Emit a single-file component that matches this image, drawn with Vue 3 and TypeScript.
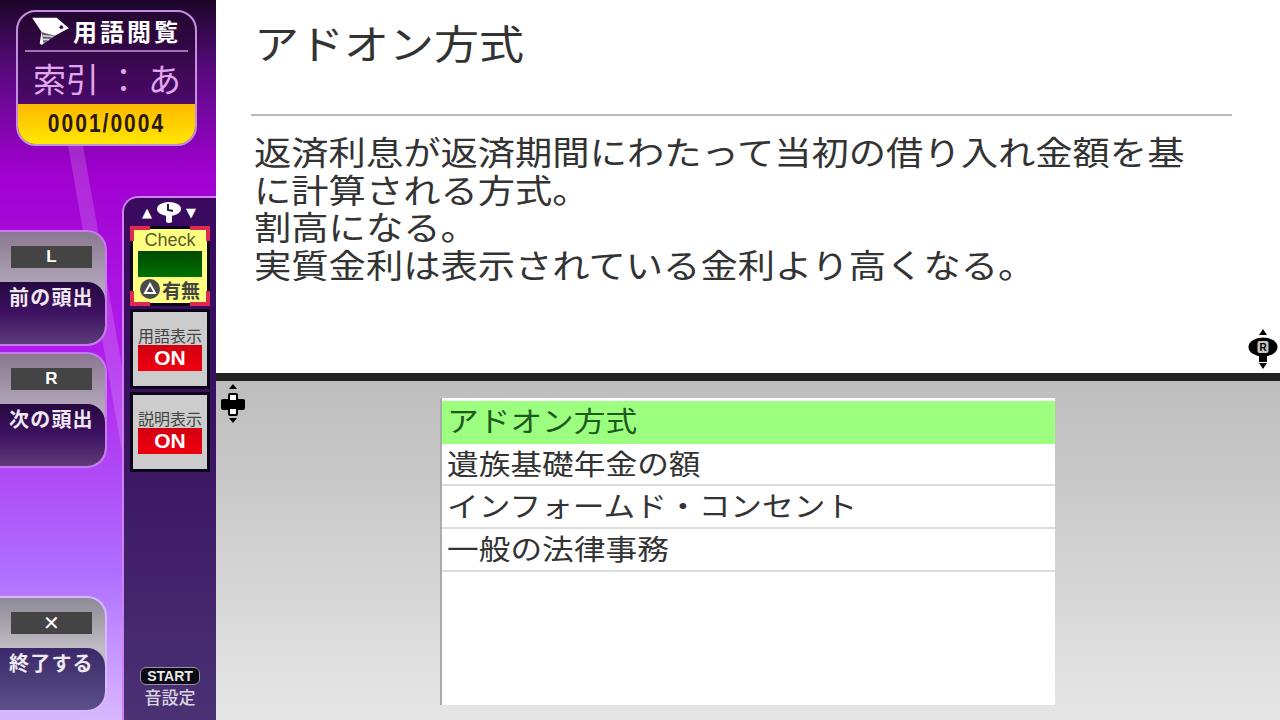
<script setup lang="ts">
interface NavButton { key: string; label: string; offset: string }
const navButtons: NavButton[] = [
  { key: 'L', label: '前の頭出', offset: 'top' },
  { key: 'R', label: '次の頭出', offset: 'mid' },
  { key: '✕', label: '終了する', offset: 'end' },
]
const toggles = ['用語表示', '説明表示']
const terms = ['アドオン方式', '遺族基礎年金の額', 'インフォームド・コンセント', '一般の法律事務']
const lines = [
  '返済利息が返済期間にわたって当初の借り入れ金額を基',
  'に計算される方式。',
  '割高になる。',
  '実質金利は表示されている金利より高くなる。',
]
</script>

<template>
  <div class="screen">
    <aside class="side">
      <div class="streak"></div>
      <header class="card">
        <div class="card-title">
          <svg class="tag" viewBox="0 0 40 34" width="38" height="32">
            <path d="M0 3 L26 3 L39 14 L24 22 L10 32 L8 30 L10 18 Z" fill="#fff" />
            <path d="M10 18 L24 22 L12 30 Z" fill="#6a5a78" />
            <path d="M11 22 L22 23 M11 26 L18 26" stroke="#ddd" stroke-width="1.5" />
            <circle cx="31" cy="13" r="2" fill="#3b0a55" />
          </svg>
          <span>用語閲覧</span>
        </div>
        <div class="card-index"><span>索引</span><span class="colon">：</span><span>あ</span></div>
        <div class="card-count"><span>0001/0004</span></div>
      </header>

      <div class="side-body">
        <div class="nav-col">
          <div v-for="b in navButtons" :key="b.key" class="nav-btn" :class="b.offset">
            <div class="nav-key">{{ b.key }}</div>
            <div class="nav-label">{{ b.label }}</div>
          </div>
        </div>

        <div class="panel">
          <div class="panel-head">
            <span class="tri">▲</span>
            <svg viewBox="0 0 26 24" width="26" height="24">
              <path d="M10 12 L16 12 L16 22 Q13 24 10 22 Z" fill="#fff" />
              <ellipse cx="13" cy="9" rx="12" ry="7" fill="#fff" />
              <path d="M12 4 L12 10 L17 11" stroke="#2a1a3a" stroke-width="2" fill="none" />
            </svg>
            <span class="tri">▼</span>
          </div>
          <div class="check">
            <i class="c tl"></i><i class="c tr"></i><i class="c bl"></i><i class="c br"></i>
            <div class="check-title">Check</div>
            <div class="check-field"></div>
            <div class="check-foot">
              <svg viewBox="0 0 20 20" width="20" height="20">
                <circle cx="10" cy="10" r="10" fill="#4a4a4a" />
                <path d="M10 5 L15 14 L5 14 Z" fill="none" stroke="#fff" stroke-width="2" />
              </svg>
              <span>有無</span>
            </div>
          </div>
          <div v-for="t in toggles" :key="t" class="toggle">
            <div class="toggle-label">{{ t }}</div>
            <div class="toggle-on">ON</div>
          </div>
          <div class="start">
            <div class="start-pill">START</div>
            <div class="start-label">音設定</div>
          </div>
        </div>
      </div>
    </aside>

    <main class="main">
      <section class="upper">
        <h1 class="title">アドオン方式</h1>
        <hr class="rule" />
        <div class="desc">
          <div v-for="l in lines" :key="l" class="desc-line">{{ l }}</div>
        </div>
        <svg class="r-pad" viewBox="0 0 30 42" width="30" height="42">
          <path d="M15 0 L19 6 L11 6 Z M15 40 L19 34 L11 34 Z" fill="#000" />
          <path d="M11 22 L19 22 L19 33 L11 33 Z" fill="#000" />
          <ellipse cx="15" cy="18" rx="14.5" ry="9.5" fill="#000" />
          <rect x="9.5" y="12" width="11" height="12" rx="2" fill="#c4c4c4" />
          <text x="15" y="22" text-anchor="middle" class="r-text">R</text>
        </svg>
      </section>
      <section class="lower">
        <svg class="d-pad" viewBox="0 0 24 40" width="24" height="40">
          <path d="M12 0 L16 5 L8 5 Z M12 39 L16 34 L8 34 Z" fill="#000" />
          <path d="M7 11 Q7 9 9 9 H15 Q17 9 17 11 V15 H22 Q24 15 24 17 V24 Q24 26 22 26 H17 V30 Q17 32 15 32 H9 Q7 32 7 30 V26 H2 Q0 26 0 24 V17 Q0 15 2 15 H7 Z" fill="#000" />
          <path d="M9 11 H15 V16 H9 Z M9 25 H15 V30 H9 Z" fill="#fff" />
        </svg>
        <ul class="list">
          <li v-for="(t, i) in terms" :key="t" class="row" :class="{ active: i === 0 }"><span class="row-text">{{ t }}</span></li>
        </ul>
      </section>
    </main>
  </div>
</template>

<style>
html, body { margin: 0; padding: 0; background: #000; }
</style>

<style scoped>
.screen {
  display: flex;
  width: 1280px;
  height: 720px;
  overflow: hidden;
  font-family: "Noto Sans CJK JP", "Liberation Sans", sans-serif;
}
.side {
  position: relative;
  width: 216px;
  flex: none;
  padding-top: 10px;
  box-sizing: border-box;
  background: linear-gradient(180deg, #1c0628 0%, #5a0a80 10%, #a000d0 24%, #b020ec 50%, #b070ff 80%, #d8b8ff 100%);
}
.streak {
  position: absolute;
  left: 60px;
  top: 100px;
  width: 15px;
  height: 640px;
  background: rgba(255, 255, 255, 0.16);
  transform: skewX(10deg);
  transform-origin: top;
}
.card {
  position: relative;
  width: 181px;
  height: 136px;
  margin-left: 16px;
  box-sizing: border-box;
  border: 2px solid #c58fe0;
  border-radius: 20px;
  background: linear-gradient(180deg, #24062f 0%, #5c0a84 100%);
  overflow: hidden;
  display: flex;
  flex-direction: column;
}
.card-title {
  display: flex;
  align-items: center;
  gap: 3px;
  height: 38px;
  margin: 0 7px;
  padding-left: 7px;
  border-bottom: 2px solid #a070b0;
  color: #fff;
  font-weight: 700;
  font-size: 24px;
  line-height: 1;
  letter-spacing: 3px;
  white-space: nowrap;
}
.tag { flex: none; }
.card-index {
  display: flex;
  justify-content: space-between;
  padding: 0 14px 0 15px;
  height: 52px;
  align-items: center;
  color: #e0a8ec;
  font-size: 33px;
  line-height: 1;
  font-weight: 400;
}
.colon { width: 34px; text-align: center; }
.card-count {
  flex: 1;
  display: flex;
  align-items: center;
  justify-content: center;
  background: linear-gradient(180deg, #ffb800 0%, #ffe800 100%);
  color: #2a1a10;
  font-family: "Liberation Sans", sans-serif;
  font-weight: 700;
  font-size: 21px;
  letter-spacing: 2px;
}
.card-count span { display: inline-block; transform: scaleY(1.2); }
.side-body {
  position: relative;
  display: flex;
  justify-content: space-between;
  margin-top: 50px;
}
.nav-col {
  width: 107px;
  height: 524px;
  display: flex;
  flex-direction: column;
  padding-top: 34px;
  box-sizing: border-box;
}
.nav-btn {
  position: relative;
  box-sizing: border-box;
  height: 116px;
  padding-top: 14px;
  border: 2px solid #c878f0;
  border-left: none;
  border-radius: 0 20px 20px 0;
  background: linear-gradient(180deg, #8a7890 0%, #b4a8bc 50%);
  overflow: hidden;
}
.nav-btn.mid { margin-top: 6px; }
.nav-btn.end {
  margin-top: auto;
  margin-bottom: 8px;
  border-color: #d8b8ff;
  background: linear-gradient(180deg, #8e8a96 0%, #c0bcc4 45%);
}
.nav-key {
  margin-left: 11px;
  width: 81px;
  height: 22px;
  background: #444;
  color: #fff;
  font-family: "Liberation Sans", sans-serif;
  font-weight: 700;
  font-size: 17px;
  line-height: 22px;
  text-align: center;
}
.nav-btn.end .nav-key { font-family: "DejaVu Sans", sans-serif; font-size: 20px; }
.nav-label {
  position: absolute;
  left: 0;
  right: 0;
  bottom: 0;
  top: 50px;
  padding-left: 9px;
  border-radius: 0 18px 18px 0;
  background: linear-gradient(180deg, #260840 0%, #3e1262 50%, #5e3c78 100%);
  color: #f0e8f0;
  font-weight: 700;
  font-size: 20px;
  line-height: 30px;
  letter-spacing: 1.2px;
  white-space: nowrap;
}
.nav-btn.end .nav-label { background: linear-gradient(180deg, #3a2868 0%, #5a5088 100%); }
.panel {
  position: relative;
  width: 94px;
  height: 524px;
  box-sizing: border-box;
  border: 2px solid #d080f0;
  border-right: none;
  border-bottom: none;
  border-radius: 16px 0 0 0;
  background: linear-gradient(180deg, #3a0a60 0%, #3a1060 40%, #4a3274 100%);
  display: flex;
  flex-direction: column;
  padding-left: 6px;
}
.panel-head {
  display: flex;
  align-items: center;
  justify-content: center;
  gap: 4px;
  height: 28px;
  margin-right: 8px;
  color: #fff;
}
.tri { font-size: 13px; line-height: 1; font-family: "DejaVu Sans", sans-serif; }
.check {
  position: relative;
  width: 80px;
  height: 80px;
  box-sizing: border-box;
  background: #ffff80;
  border: 3px solid #0c0418;
  padding: 2px 5px 0;
  text-align: center;
}
.c { position: absolute; width: 20px; height: 15px; border: 4px solid #e02850; box-sizing: border-box; }
.tl { left: -3px; top: -3px; border-right: none; border-bottom: none; }
.tr { right: -3px; top: -3px; border-left: none; border-bottom: none; }
.bl { left: -3px; bottom: -3px; border-right: none; border-top: none; }
.br { right: -3px; bottom: -3px; border-left: none; border-top: none; }
.check-title {
  font-family: "Liberation Sans", sans-serif;
  font-size: 18px;
  line-height: 18px;
  color: #5a5a30;
}
.check-field {
  height: 26px;
  margin-top: 2px;
  background: linear-gradient(180deg, #004800, #007000);
}
.check-foot {
  display: flex;
  align-items: center;
  justify-content: center;
  gap: 2px;
  height: 24px;
  color: #444;
  font-size: 19px;
  font-weight: 700;
  line-height: 1;
  white-space: nowrap;
}
.toggle {
  width: 80px;
  height: 80px;
  box-sizing: border-box;
  margin-top: 3px;
  border: 3px solid #0c0418;
  background: #ccc;
  display: flex;
  flex-direction: column;
  align-items: center;
  justify-content: flex-end;
  padding-bottom: 15px;
}
.toggle-label {
  color: #444;
  font-size: 16px;
  line-height: 20px;
  white-space: nowrap;
}
.toggle-on {
  width: 64px;
  height: 26px;
  background: linear-gradient(180deg, #d00010, #f00010);
  color: #fff;
  font-family: "Liberation Sans", sans-serif;
  font-weight: 700;
  font-size: 21px;
  line-height: 26px;
  text-align: center;
}
.start {
  margin-top: auto;
  margin-bottom: 13px;
  margin-right: 6px;
  display: flex;
  flex-direction: column;
  align-items: center;
}
.start-pill {
  width: 58px;
  height: 16px;
  border: 1px solid #9a90a8;
  border-radius: 6px;
  background: #0a0a14;
  color: #e8e8e8;
  font-family: "Liberation Sans", sans-serif;
  font-weight: 700;
  font-size: 14px;
  line-height: 16px;
  text-align: center;
}
.start-label {
  margin-top: 2px;
  color: #d8d4e0;
  font-size: 17px;
  line-height: 20px;
  font-weight: 500;
}
.main {
  flex: 1;
  display: flex;
  flex-direction: column;
  min-width: 0;
}
.upper {
  position: relative;
  height: 373px;
  flex: none;
  box-sizing: border-box;
  background: #fff;
  padding: 16px 48px 0 35px;
  color: #333;
}
.title {
  margin: 0 0 0 3px;
  height: 52px;
  font-weight: 400;
  font-size: 40px;
  line-height: 52px;
  white-space: nowrap;
  transform: scaleX(1.125);
  transform-origin: left;
}
.rule {
  margin: 46px 0 0;
  border: none;
  height: 2px;
  background: #bbb;
}
.desc {
  margin: 19px 0 0 3px;
}
.desc-line {
  height: 37.6px;
  font-family: "Liberation Sans", "Noto Sans CJK JP", sans-serif;
  font-size: 33.3px;
  line-height: 37.6px;
  white-space: nowrap;
  transform: scaleX(1.12);
  transform-origin: left;
}
.r-pad { position: absolute; right: 2px; bottom: 2px; }
.r-text { font: 700 10px "Liberation Sans", sans-serif; fill: #000; }
.lower {
  position: relative;
  flex: 1;
  border-top: 8px solid #222;
  background: linear-gradient(180deg, #bdbdbd 0%, #e6e6e6 100%);
  display: flex;
  justify-content: center;
  align-items: flex-start;
  padding: 17px 2px 0 0;
  box-sizing: border-box;
}
.d-pad { position: absolute; left: 5px; top: 3px; }
.list {
  list-style: none;
  margin: 0;
  padding: 3px 0 0;
  width: 615px;
  height: 307px;
  box-sizing: border-box;
  background: #fff;
  border-left: 2px solid #aaa;
}
.row {
  height: 42.7px;
  box-sizing: border-box;
  padding-left: 5px;
  border-bottom: 2px solid #ddd;
  color: #333;
  line-height: 38px;
  white-space: nowrap;
}
.row-text {
  display: inline-block;
  font-size: 28.3px;
  transform: scaleX(1.12);
  transform-origin: left;
}
.row.active {
  background: #9cff80;
  border-bottom-color: #9cff80;
  color: #1e5a1e;
}
</style>
